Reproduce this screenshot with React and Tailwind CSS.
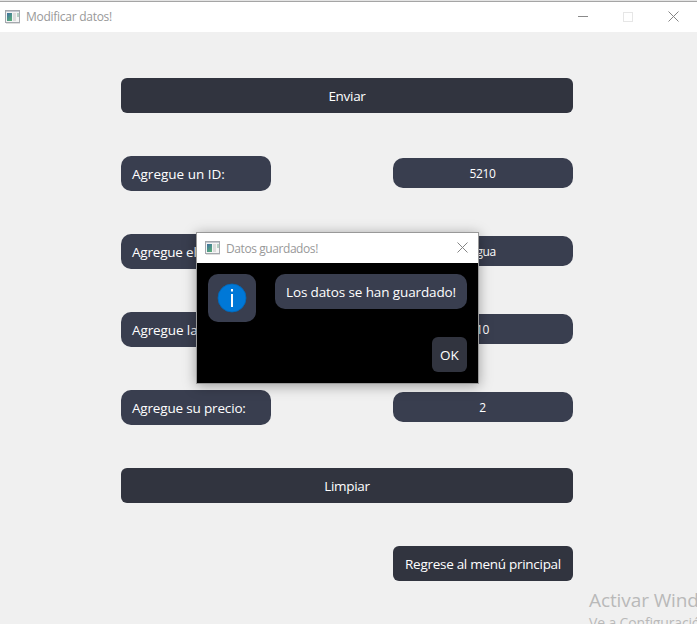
import React from "react";

function AppIcon() {
  return (
    <svg width="16" height="15" viewBox="0 0 16 15" className="shrink-0">
      <defs>
        <linearGradient id="pane" x1="0" y1="0" x2="0.6" y2="1">
          <stop offset="0" stopColor="#3f6fa0" />
          <stop offset="1" stopColor="#57ab7c" />
        </linearGradient>
      </defs>
      <rect x="0.5" y="0.5" width="14" height="12" fill="#f4f4f4" stroke="#a4a8ae" />
      <rect x="1" y="1" width="13" height="1" fill="#c3c8d0" />
      <rect x="2" y="3" width="5" height="8" fill="url(#pane)" />
      <rect x="8" y="3" width="3" height="8" fill="#dcdcdc" />
      <rect x="12" y="3" width="2" height="4" fill="#b5d0c4" />
      <rect x="1" y="13" width="14" height="1" fill="#dedede" />
    </svg>
  );
}

function CloseIcon() {
  return (
    <svg width="11" height="11" viewBox="0 0 11 11" className="shrink-0">
      <path d="M0.5 0.5L10.5 10.5M10.5 0.5L0.5 10.5" stroke="#858585" strokeWidth="1" fill="none" />
    </svg>
  );
}

function Button({ children, className = "" }) {
  return (
    <button className={"flex h-[35px] items-center justify-center whitespace-nowrap rounded-[6px] bg-[#31343f] pt-[2px] text-[13.5px] leading-none text-white " + className}>
      {children}
    </button>
  );
}

function Row({ label, labelClass = "", value }) {
  return (
    <div className="flex h-[35px] items-start justify-between">
      <div className="flex h-[35px] w-[150px] items-center rounded-[10px] bg-[#393e4f] pl-[11px] pt-[2px] text-[13.5px] leading-none text-white">
        <span className={"whitespace-nowrap " + labelClass}>{label}</span>
      </div>
      <div className="mt-[2px] flex h-[30px] w-[180px] items-center justify-center rounded-[10px] bg-[#393e4f] pr-px pt-[2px] text-[12px] leading-none tracking-[-0.4px] text-white">
        {value}
      </div>
    </div>
  );
}

export default function App() {
  return (
    <div className="relative h-[624px] w-[697px] overflow-hidden bg-[#f0f0f0] font-['Open_Sans','Noto_Sans',sans-serif]">
      <header className="flex h-8 items-center border-t border-[#e4e4e4] bg-white">
        <div className="flex h-[31px] w-full items-center border-t border-[#a5a5a5] pl-[5px] text-[12px] leading-none text-[#999]">
          <AppIcon />
          <span className="ml-[5px] whitespace-nowrap tracking-[-0.27px]">Modificar datos!</span>
          <div className="ml-auto flex items-center pb-px pr-[18px]">
            <div className="h-px w-[10px] bg-[#8a8a8a]" />
            <div className="ml-[35px] h-[10px] w-[10px] border border-[#e6e6e6]" />
            <div className="ml-[35px]"><CloseIcon /></div>
          </div>
        </div>
      </header>

      <main className="ml-[121px] flex w-[452px] flex-col gap-[43px] pt-[46px]">
        <Button className="tracking-[-0.3px]">Enviar</Button>
        <Row label="Agregue un ID:" value="5210" />
        <Row label="Agregue el nombre:" labelClass="tracking-[-0.2px]" value="Agua" />
        <Row label="Agregue la cantidad:" labelClass="tracking-[-0.1px]" value="10" />
        <Row label="Agregue su precio:" labelClass="tracking-[-0.17px]" value="2" />
        <Button className="tracking-[-0.3px]">Limpiar</Button>
        <Button className="w-[180px] self-end tracking-[-0.28px]">Regrese al menú principal</Button>
      </main>

      <div className="absolute left-[589px] top-[588px] whitespace-nowrap text-[#b9b9b9]">
        <div className="text-[19px] leading-[25px] tracking-[-0.1px]">Activar Windows</div>
        <div className="text-[14px] leading-[20px] tracking-[-0.15px]">Ve a Configuración</div>
      </div>

      <section className="absolute left-[196px] top-[232px] flex h-[152px] w-[283px] flex-col border border-[#999] bg-black shadow-[0_2px_12px_rgba(0,0,0,0.35)]">
        <div className="flex h-[30px] shrink-0 items-center bg-white pl-2 pr-[10px] text-[12px] leading-none text-[#999]">
          <AppIcon />
          <span className="ml-[5px] whitespace-nowrap pt-px tracking-[-0.42px]">Datos guardados!</span>
          <div className="ml-auto pb-[2px]"><CloseIcon /></div>
        </div>
        <div className="flex items-start justify-between px-[11px] pt-[11px]">
          <div className="flex h-12 w-12 items-center justify-center rounded-[10px] bg-[#393e4f]">
            <svg width="30" height="30" viewBox="0 0 30 30">
              <circle cx="15" cy="15" r="14" fill="#0078d7" stroke="#0067b8" strokeWidth="0.8" />
              <rect x="14" y="6" width="2" height="2.5" fill="#fff" />
              <rect x="14" y="11" width="2" height="13" fill="#fff" />
            </svg>
          </div>
          <div className="flex h-[35px] w-[192px] items-center justify-center rounded-[10px] bg-[#393e4f] pt-[2px] text-[13.5px] leading-none text-white">
            <span className="whitespace-nowrap tracking-[-0.12px]">Los datos se han guardado!</span>
          </div>
        </div>
        <Button className="mr-[11px] mt-[15px] w-[35px] self-end">OK</Button>
      </section>
    </div>
  );
}
